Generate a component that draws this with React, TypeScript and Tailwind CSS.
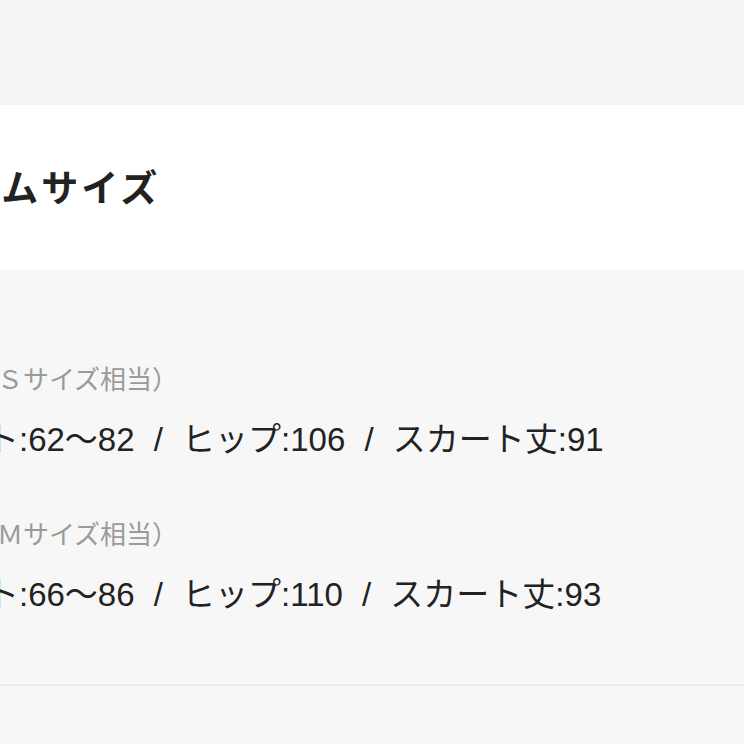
const sizes = [
  { label: 'サイズ(Ｓサイズ相当）', detail: 'ウエスト:62〜82 / ヒップ:106 / スカート丈:91' },
  { label: 'サイズ(Ｍサイズ相当）', detail: 'ウエスト:66〜86 / ヒップ:110 / スカート丈:93' },
]

export default function App() {
  return (
    <div
      className="w-[744px] h-[744px] overflow-hidden bg-[#f7f7f7]"
      style={{ fontFamily: '"Liberation Sans", "Noto Sans CJK JP", sans-serif' }}
    >
      <div className="h-[105px] bg-[#f4f4f4]" />

      {/* section header */}
      <div className="h-[165px] bg-white flex items-center overflow-hidden">
        <h2 className="-ml-[115px] mt-[4px] whitespace-nowrap text-[37px] font-bold tracking-[3px] text-[#222]">
          アイテムサイズ
        </h2>
      </div>

      <div className="pt-[94px] pb-[69px] overflow-hidden">
        <div className="flex flex-col gap-[59px]">
          {sizes.map((s) => (
            <div key={s.label} className="flex flex-col gap-[24px]">
              <p className="-ml-[89px] whitespace-nowrap text-[26px] leading-[32px] text-[#9a9a9a]">
                {s.label}
              </p>
              <p className="-ml-[113px] whitespace-nowrap text-[33px] leading-[40px] text-[#222] [word-spacing:10px]">
                {s.detail}
              </p>
            </div>
          ))}
        </div>
      </div>
      <div className="h-[2px] bg-[#ebebeb]" />
    </div>
  )
}
